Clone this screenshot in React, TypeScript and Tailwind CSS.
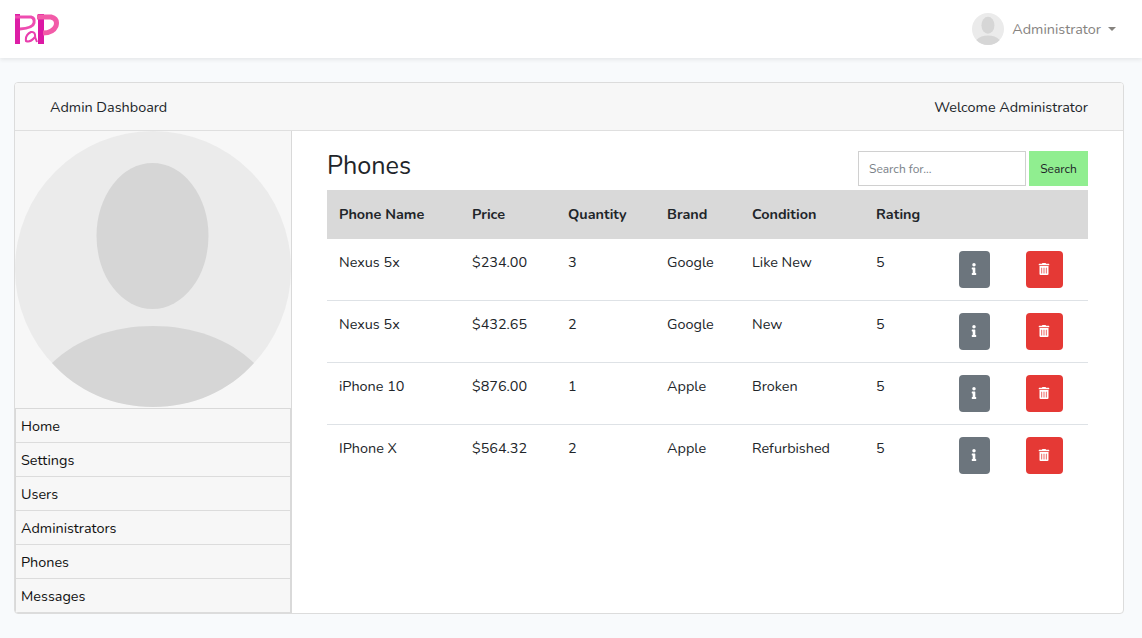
import { FaInfo, FaTrashAlt } from 'react-icons/fa'

const phones = [
  { name: 'Nexus 5x', price: '$234.00', quantity: 3, brand: 'Google', condition: 'Like New', rating: 5 },
  { name: 'Nexus 5x', price: '$432.65', quantity: 2, brand: 'Google', condition: 'New', rating: 5 },
  { name: 'iPhone 10', price: '$876.00', quantity: 1, brand: 'Apple', condition: 'Broken', rating: 5 },
  { name: 'IPhone X', price: '$564.32', quantity: 2, brand: 'Apple', condition: 'Refurbished', rating: 5 },
]

const links = ['Home', 'Settings', 'Users', 'Administrators', 'Phones', 'Messages']

function Logo() {
  return (
    <svg width="44" height="30" viewBox="0 0 44 30" fill="none">
      <path d="M2.500 0V30" stroke="#dd1ea6" strokeWidth="5" />
      <path d="M0 3H16Q20 4 19 9Q18 14 5 15" stroke="#ee4cb0" strokeWidth="3" />
      <path d="M20 25Q21 17 16 18Q10 21 11 27Q15 29 20 23L22 28" stroke="#e93fae" strokeWidth="2" />
      <path d="M26 0V30" stroke="#dc18a4" strokeWidth="6" />
      <path d="M22 3H36Q43 5 41 12Q38 19 28 19" stroke="#f25ba8" strokeWidth="5" />
    </svg>
  )
}

function Avatar({ className }: { className: string }) {
  return (
    <svg viewBox="0 0 276 276" className={className}>
      <circle cx="138" cy="138" r="138" fill="#ebebeb" />
      <ellipse cx="137.500" cy="105" rx="56" ry="73" fill="#d6d6d6" />
      <path d="M37 232C62 208 98 195 138 195C178 195 214 208 239 232C214 260 178 276 138 276C98 276 62 260 37 232Z" fill="#d6d6d6" />
    </svg>
  )
}

export default function App() {
  return (
    <div className="min-h-[638px] bg-[#f8fafc] font-['Nunito','Lato',sans-serif] text-[14.400px] text-[#212529]">
      <nav className="flex h-[58px] items-center justify-between bg-white pl-[15px] pr-[26px] shadow-[0_2px_4px_rgba(0,0,0,0.075)]">
        <Logo />
        <div className="flex items-center text-[#86837f]">
          <Avatar className="h-8 w-8" />
          <span className="ml-2 pt-[2px]">Administrator</span>
          <span className="ml-[7px] h-0 w-0 border-x-[4px] border-t-[4px] border-x-transparent border-t-[#86837f]" />
        </div>
      </nav>

      <main className="pl-[14px] pr-[18px] pt-6">
        <div className="h-[532px] overflow-hidden rounded border border-[#dcdcdc] bg-white">
          <div className="flex h-[48px] items-center justify-between border-b border-[#dfdfdf] bg-[#f7f7f7] px-[35px] pt-[2px]">
            <span>Admin Dashboard</span>
            <span>Welcome Administrator</span>
          </div>

          <div className="flex h-[482px]">
            <aside className="w-[277px] border-r border-[#d9d9d9]">
              <div className="h-[277px] bg-[#f7f7f7]">
                <Avatar className="h-[276px] w-[276px]" />
              </div>
              <ul className="border-x border-t border-[#d9d9d9] bg-[#f7f7f7]">
                {links.map((link) => (
                  <li key={link} className="flex h-[34px] items-center border-b border-[#dcdcdc] pl-[5px] pt-[2px] text-[#111]">
                    {link}
                  </li>
                ))}
              </ul>
            </aside>

            <section className="flex-1 px-[35px] pt-5">
              <div className="flex h-[39px] items-start justify-between">
                <h1 className="text-[25.200px] leading-[30px]">Phones</h1>
                <div className="flex gap-[3px]">
                  <input
                    placeholder="Search for..."
                    className="h-[35px] w-[168px] border border-[#d0d0d0] px-[10px] text-[12px] placeholder-[#7a8288] outline-none"
                  />
                  <button className="h-[35px] w-[59px] bg-[#90ee90] pt-[1px] text-[12px] text-[#212529]">Search</button>
                </div>
              </div>

              <table className="w-[761px] table-fixed border-separate border-spacing-0 text-left">
                <thead>
                  <tr className="h-[49px] bg-[#d9d9d9]">
                    <th className="w-[133px] pl-3 font-bold">Phone Name</th>
                    <th className="w-[96px] pl-3 font-bold">Price</th>
                    <th className="w-[99px] pl-3 font-bold">Quantity</th>
                    <th className="w-[85px] pl-3 font-bold">Brand</th>
                    <th className="w-[124px] pl-3 font-bold">Condition</th>
                    <th className="w-[83px] pl-3 font-bold">Rating</th>
                    <th className="w-[67px]" />
                    <th className="w-[74px]" />
                  </tr>
                </thead>
                <tbody>
                  {phones.map((phone, i) => {
                    const line = i < phones.length - 1 ? 'border-b border-[#dee2e6]' : ''
                    const cell = `h-[62px] pl-3 pt-[13px] align-top ${line}`
                    const action = `h-[62px] pl-3 pt-3 align-top ${line}`
                    return (
                      <tr key={phone.price}>
                        <td className={cell}>{phone.name}</td>
                        <td className={cell}>{phone.price}</td>
                        <td className={cell}>{phone.quantity}</td>
                        <td className={cell}>{phone.brand}</td>
                        <td className={cell}>{phone.condition}</td>
                        <td className={cell}>{phone.rating}</td>
                        <td className={action}>
                          <button className="flex h-[37px] w-[31px] items-center justify-center rounded bg-[#6c757d] pb-[2px] pr-[1px] text-white">
                            <FaInfo className="h-3 w-3" />
                          </button>
                        </td>
                        <td className={action}>
                          <button className="flex h-[37px] w-[37px] items-center justify-center rounded bg-[#e53935] pb-[2px] pr-[1px] text-white">
                            <FaTrashAlt className="h-3 w-3" />
                          </button>
                        </td>
                      </tr>
                    )
                  })}
                </tbody>
              </table>
            </section>
          </div>
        </div>
      </main>
    </div>
  )
}
